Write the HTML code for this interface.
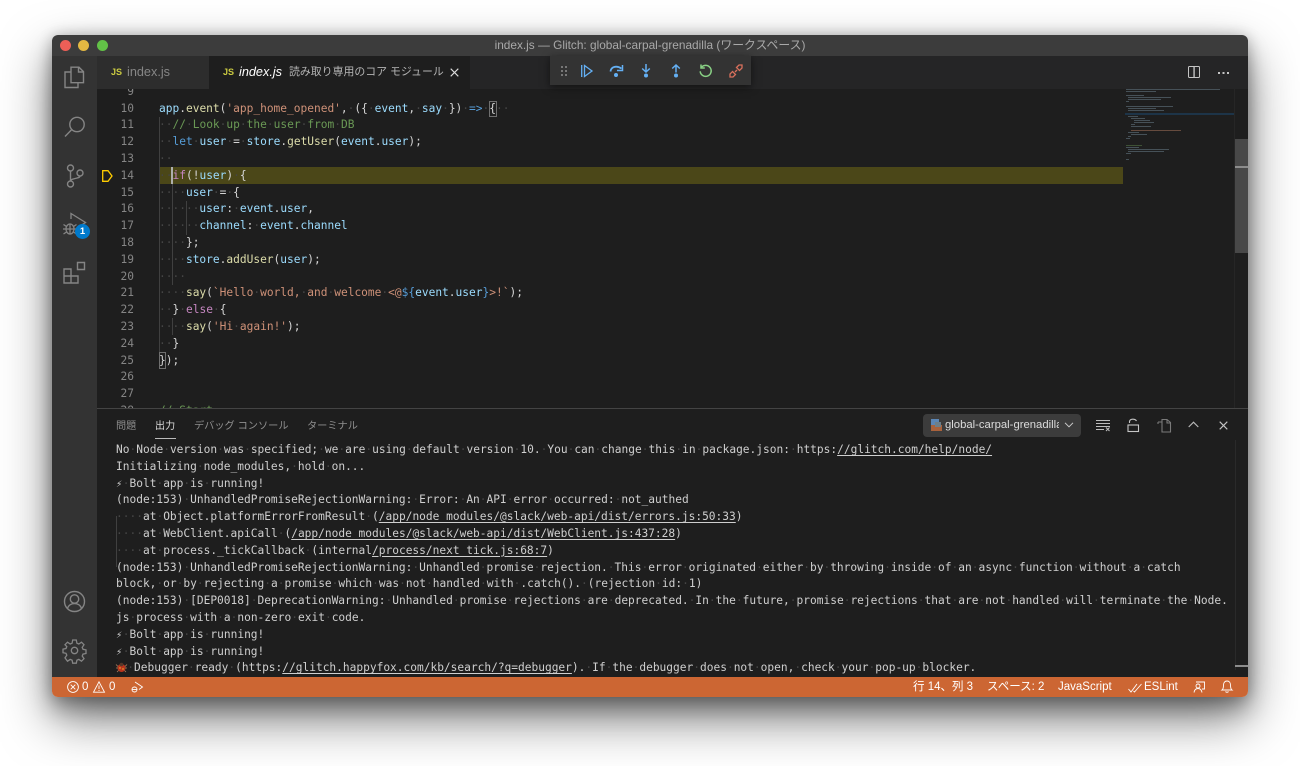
<!DOCTYPE html>
<html lang="ja"><head><meta charset="utf-8"><title>index.js</title>
<style>
html,body{margin:0;padding:0;width:1300px;height:766px;overflow:hidden;background:#fff}
body{position:relative;font-family:"Liberation Sans","Noto Sans CJK JP",sans-serif}
.a{position:absolute}
#win{position:absolute;left:52px;top:35px;width:1196px;height:662px;border-radius:6px;box-shadow:0 22px 50px rgba(0,0,0,.5),0 12px 22px rgba(0,0,0,.28),0 0 14px rgba(0,0,0,.2)}
.mono{font:11.2px/16.8px "DejaVu Sans Mono","Liberation Mono",monospace;white-space:pre}
.mono i{font-style:normal;color:#454545}
.v{color:#9cdcfe}.f{color:#dcdcaa}.s{color:#ce9178}.k{color:#569cd6}.c{color:#c586c0}.m{color:#6a9955}.t{color:#d4d4d4}
u{text-decoration:underline;text-underline-offset:2px}
svg{position:absolute;overflow:visible}
.st{position:absolute;top:680px;color:#fff;font-size:11.5px;line-height:14px;white-space:nowrap}
</style></head><body>
<div id="win"></div>
<div class="a" style="left:52px;top:35px;width:1196px;height:21px;background:#3c3c3c;border-radius:6px 6px 0 0"></div>
<div class="a" style="left:60px;top:40px;width:11px;height:11px;border-radius:50%;background:#ed5f57"></div>
<div class="a" style="left:78px;top:40px;width:11px;height:11px;border-radius:50%;background:#e3b842"></div>
<div class="a" style="left:97px;top:40px;width:11px;height:11px;border-radius:50%;background:#62c147"></div>
<div class="a" style="left:52px;top:35px;width:1196px;height:21px;line-height:21px;text-align:center;color:#a9a9a9;font-size:11.85px">index.js — Glitch: global-carpal-grenadilla (ワークスペース)</div>

<div class="a" style="left:52px;top:56px;width:45px;height:621px;background:#333"></div>
<div class="a" style="left:97px;top:56px;width:1151px;height:33px;background:#252526"></div>
<div class="a" style="left:97px;top:56px;width:112px;height:33px;background:#2d2d2d"></div>
<div class="a" style="left:209px;top:56px;width:261px;height:33px;background:#1e1e1e"></div>
<div class="a" style="left:111px;top:67px;color:#cbcb41;font-size:9px;font-weight:bold;line-height:11px">JS</div>
<div class="a" style="left:127px;top:64px;color:#868686;font-size:12.7px;line-height:16px">index.js</div>
<div class="a" style="left:223px;top:67px;color:#cbcb41;font-size:9px;font-weight:bold;line-height:11px">JS</div>
<div class="a" style="left:239px;top:64px;color:#fff;font-size:12.7px;line-height:16px;font-style:italic">index.js</div>
<div class="a" style="left:289px;top:64px;color:#b4b4b4;font-size:10.9px;line-height:16px;white-space:nowrap">読み取り専用のコア モジュール</div>
<svg style="left:450px;top:68px" width="9" height="9" viewBox="0 0 9 9"><path d="M.7.7l7.6 7.6M8.3.7L.7 8.3" stroke="#ddd" stroke-width="1.1" fill="none"/></svg>
<svg style="left:1188px;top:66px" width="12" height="12" viewBox="0 0 12 12"><rect x=".5" y=".5" width="11" height="11" rx="1" fill="none" stroke="#c5c5c5"/><rect x="5.2" y="1" width="1.8" height="10" fill="#a0a0a0"/></svg>
<div class="a" style="left:1218px;top:72px;width:2px;height:2px;background:#c5c5c5;box-shadow:4.5px 0 #c5c5c5,9px 0 #c5c5c5"></div>

<!-- activity icons -->
<svg style="left:63px;top:66px" width="23" height="24" viewBox="0 0 23 24" fill="none" stroke="#858585" stroke-width="1.4"><path d="M8 1.2h8l4.5 4.5v11H8zM15.5 1.5v4.5h5"/><path d="M8 6H2v15.5h13V17"/></svg>
<svg style="left:64px;top:116px" width="22" height="22" viewBox="0 0 22 22" fill="none" stroke="#858585" stroke-width="1.4"><circle cx="13" cy="8.5" r="7.2"/><path d="M7.8 13.5L1 20.5"/></svg>
<svg style="left:65px;top:164px" width="20" height="24" viewBox="0 0 20 24" fill="none" stroke="#858585" stroke-width="1.4"><circle cx="5.5" cy="4" r="3"/><circle cx="5.5" cy="20" r="3"/><circle cx="15" cy="9" r="3"/><path d="M5.5 7v10M15 12c0 3-9.5 2-9.5 5"/></svg>
<svg style="left:62px;top:212px" width="26" height="26" viewBox="0 0 26 26" fill="none" stroke="#858585" stroke-width="1.3"><path d="M9 7V1.5l14.5 9-7 4.5"/><ellipse cx="8" cy="17" rx="4" ry="5"/><path d="M8 12v10M4 17h8M1.5 12.5l3 2M14.5 12.5l-3 2M1 17h3M15 17h-3M1.5 22l3-2M14.5 22l-3-2"/></svg>
<div class="a" style="left:75px;top:224px;width:15px;height:15px;border-radius:50%;background:#007acc;color:#fff;font-size:9.5px;font-weight:bold;line-height:15px;text-align:center">1</div>
<svg style="left:63px;top:261px" width="23" height="24" viewBox="0 0 23 24" fill="none" stroke="#858585" stroke-width="1.4"><path d="M1 8h7v7H1zM1 15h7v7H1zM8 15h7v7H8z"/><path d="M14.5 1.5h7v7h-7z"/></svg>
<svg style="left:64px;top:591px" width="21" height="21" viewBox="0 0 21 21" fill="none" stroke="#858585" stroke-width="1.4"><circle cx="10.5" cy="10.5" r="10"/><circle cx="10.5" cy="8" r="4.2"/><path d="M3.5 17.5c1-3.5 4-5 7-5s6 1.5 7 5"/></svg>
<svg style="left:63px;top:639px" width="23" height="23" viewBox="0 0 23 23" fill="none" stroke="#858585" stroke-width="1.3"><circle cx="11.5" cy="11.5" r="3.2"/><path d="M9.7 1h3.6l.6 3.2 1.9.8 2.7-1.8 2.5 2.5-1.8 2.7.8 1.9 3 .6v3.6l-3 .6-.8 1.9 1.8 2.7-2.5 2.5-2.700-1.800-1.900.8-.6 3H9.7l-.6-3-1.900-.8-2.700 1.800L2 18.900l1.800-2.700-.8-1.900-3-.6v-3.600l3-.6.8-1.900L2 5.700l2.500-2.500 2.700 1.800 1.900-.8z"/></svg>

<!-- editor -->
<div class="a" style="left:97px;top:89px;width:1151px;height:319px;background:#1e1e1e;overflow:hidden">
 <div class="a" style="left:62px;top:78px;width:964px;height:17px;background:#4b4718"></div>
 <div class="a" style="left:62px;top:28px;width:1px;height:235px;background:#404040"></div>
 <div class="a" style="left:75px;top:95px;width:1px;height:101px;background:#404040"></div>
 <div class="a" style="left:75px;top:229px;width:1px;height:17px;background:#404040"></div>
 <div class="a" style="left:89px;top:112px;width:1px;height:34px;background:#404040"></div>
 <div class="a" style="left:74px;top:78px;width:2px;height:17px;background:#aeafad"></div>
 <div class="a" style="left:392px;top:12px;width:6px;height:14px;border:1px solid #6f6f6f;box-sizing:content-box"></div>
 <div class="a" style="left:62px;top:263px;width:5px;height:15px;border:1px solid #6f6f6f"></div>
 <svg style="left:5px;top:81px" width="11" height="12" viewBox="0 0 11 12"><path d="M.7.7H6L10 6l-4 5.300H.7z" fill="none" stroke="#ffcc00" stroke-width="1.300"/></svg>
 <div class="a mono" style="left:0;top:-5.2px;width:37px;text-align:right;color:#858585">9
10
11
12
13
14
15
16
17
18
19
20
21
22
23
24
25
26
27
28</div>
 <div class="a mono t" style="left:62px;top:-5.2px">
<span class="v">app</span>.<span class="f">event</span>(<span class="s">'app_home_opened'</span>,<i>·</i>({<i>·</i><span class="v">event</span>,<i>·</i><span class="v">say</span><i>·</i>})<i>·</i><span class="k">=&gt;</span><i>·</i>{<i>··</i>
<i>··</i><span class="m">//<i>·</i>Look<i>·</i>up<i>·</i>the<i>·</i>user<i>·</i>from<i>·</i>DB</span>
<i>··</i><span class="k">let</span><i>·</i><span class="v">user</span><i>·</i>=<i>·</i><span class="v">store</span>.<span class="f">getUser</span>(<span class="v">event</span>.<span class="v">user</span>);
<i>··</i>
<i>··</i><span class="c">if</span>(!<span class="v">user</span>)<i>·</i>{
<i>····</i><span class="v">user</span><i>·</i>=<i>·</i>{
<i>······</i><span class="v">user</span>:<i>·</i><span class="v">event</span>.<span class="v">user</span>,
<i>······</i><span class="v">channel</span>:<i>·</i><span class="v">event</span>.<span class="v">channel</span>
<i>····</i>};
<i>····</i><span class="v">store</span>.<span class="f">addUser</span>(<span class="v">user</span>);
<i>····</i>
<i>····</i><span class="f">say</span>(<span class="s">`Hello<i>·</i>world,<i>·</i>and<i>·</i>welcome<i>·</i>&lt;@</span><span class="k">${</span><span class="v">event</span>.<span class="v">user</span><span class="k">}</span><span class="s">&gt;!`</span>);
<i>··</i>}<i>·</i><span class="c">else</span><i>·</i>{
<i>····</i><span class="f">say</span>(<span class="s">'Hi<i>·</i>again!'</span>);
<i>··</i>}
});


<span class="m">//<i>·</i>Start</span></div>
 <!-- minimap -->
 <svg style="left:1028px;top:0" width="110" height="70" viewBox="0 0 110 70">
  <rect x="0" y="24" width="110" height="2" fill="#1d3448"/>
  <g fill="#7f97a8" opacity=".42">
   <rect x="1" y="0" width="94" height="1"/><rect x="1" y="2" width="30" height="1"/>
   <rect x="1" y="6" width="18" height="1"/><rect x="3" y="8" width="43" height="1"/><rect x="3" y="10" width="33" height="1"/><rect x="1" y="12" width="3" height="1"/>
   <rect x="1" y="17" width="47" height="1"/><rect x="3" y="19" width="28" height="1"/><rect x="3" y="21" width="36" height="1"/>
   <rect x="3" y="27" width="10" height="1"/><rect x="6" y="29" width="14" height="1"/><rect x="9" y="31" width="16" height="1"/><rect x="9" y="33" width="20" height="1"/><rect x="6" y="35" width="4" height="1"/><rect x="6" y="37" width="20" height="1"/>
   <rect x="6" y="41" width="50" height="1" fill="#c98a6c"/><rect x="3" y="43" width="11" height="1"/><rect x="6" y="45" width="16" height="1"/><rect x="3" y="47" width="3" height="1"/><rect x="1" y="49" width="4" height="1"/>
   <rect x="1" y="56" width="16" height="1" fill="#6a9955"/><rect x="1" y="58" width="13" height="1"/><rect x="3" y="60" width="41" height="1"/><rect x="3" y="62" width="36" height="1"/><rect x="1" y="64" width="5" height="1"/><rect x="1" y="70" width="3" height="1"/>
  </g>
 </svg>
 <div class="a" style="left:1138px;top:50px;width:13px;height:114px;background:#484848"></div>
 <div class="a" style="left:1138px;top:77px;width:13px;height:1.5px;background:#8c8c8c"></div>
 <div class="a" style="left:1137px;top:0;width:1px;height:319px;background:#262626"></div>
</div>

<!-- debug toolbar -->
<div class="a" style="left:550px;top:56px;width:201px;height:29px;background:#333;box-shadow:0 2px 8px rgba(0,0,0,.55)"></div>
<div class="a" style="left:561px;top:66px;width:2px;height:2px;background:#777;box-shadow:4px 0 #777,0 4px #777,4px 4px #777,0 8px #777,4px 8px #777"></div>
<svg style="left:581px;top:64px" width="12" height="14" viewBox="0 0 12 14" fill="none" stroke="#64b0f4" stroke-width="1.300"><path d="M.7 1v12"/><path d="M3.5 1.5L11 7l-7.5 5.500z"/></svg>
<svg style="left:609px;top:64px" width="15" height="14" viewBox="0 0 15 14"><path d="M1.5 7.500C2 3 7 1 12.500 4.500" fill="none" stroke="#64b0f4" stroke-width="1.800"/><path d="M13.500 1v5.500H8" fill="none" stroke="#64b0f4" stroke-width="1.500"/><circle cx="7" cy="11" r="2" fill="#64b0f4"/></svg>
<svg style="left:641px;top:64px" width="10" height="14" viewBox="0 0 10 14"><path d="M5 0v7.500M1.200 4.500L5 8l3.800-3.500" fill="none" stroke="#64b0f4" stroke-width="1.500"/><circle cx="5" cy="11.500" r="2" fill="#64b0f4"/></svg>
<svg style="left:671px;top:64px" width="10" height="14" viewBox="0 0 10 14"><path d="M5 8.500V1M1.200 4.500L5 1l3.800 3.500" fill="none" stroke="#64b0f4" stroke-width="1.500"/><circle cx="5" cy="11.500" r="2" fill="#64b0f4"/></svg>
<svg style="left:699px;top:64px" width="13" height="14" viewBox="0 0 13 14" fill="none" stroke="#89d185" stroke-width="1.500"><path d="M2.500 3.300a5.500 5.500 0 1 1-1.300 4"/><path d="M2 .5v3.500h3.800"/></svg>
<svg style="left:729px;top:64px" width="14" height="14" viewBox="0 0 14 14" fill="none" stroke="#d9705c" stroke-width="1.300"><path d="M7.500 3.500l2.500-2.500 3 0 0 3-2.500 2.500zM3.500 7.500L6.500 10.500 4 13H1v-3zM8 6L6 8"/></svg>

<!-- panel -->
<div class="a" style="left:97px;top:408px;width:1151px;height:269px;background:#1e1e1e;border-top:1px solid #444;box-sizing:border-box;overflow:hidden">
 <div class="a" style="left:19px;top:9.5px;color:#8f8f8f;font-size:10.1px;line-height:15px">問題</div>
 <div class="a" style="left:58px;top:9.5px;color:#dcdcdc;font-size:10.1px;line-height:15px">出力</div>
 <div class="a" style="left:58px;top:29px;width:21px;height:1px;background:#bbb"></div>
 <div class="a" style="left:97px;top:9.5px;color:#8f8f8f;font-size:10.2px;line-height:15px;white-space:nowrap">デバッグ コンソール</div>
 <div class="a" style="left:210px;top:9.5px;color:#8f8f8f;font-size:10.2px;line-height:15px;white-space:nowrap">ターミナル</div>
 <div class="a" style="left:826px;top:5px;width:158px;height:23px;background:#3c3c3c;border-radius:4px"></div>
 <svg style="left:834px;top:10px" width="11" height="13" viewBox="0 0 11 13"><rect x="0" y="0" width="8" height="6" fill="#5b86b5"/><rect x="0" y="6" width="11" height="6" fill="#a9623c"/><rect x="4" y="3" width="6" height="5" fill="#6f7f88"/></svg>
 <div class="a" style="left:848px;top:9px;width:114px;height:15px;overflow:hidden;color:#dcdcdc;font-size:11.3px;line-height:15px;white-space:nowrap">global-carpal-grenadilla</div>
 <svg style="left:967px;top:13px" width="10" height="6" viewBox="0 0 10 6"><path d="M1 .8l4 4 4-4" fill="none" stroke="#ccc" stroke-width="1"/></svg>
 <svg style="left:999px;top:10px" width="15" height="13" viewBox="0 0 15 13" fill="none" stroke="#bdbdbd" stroke-width="1"><path d="M0 1.500h14M0 4.500h14M0 7.500h14M0 10.500h8M10 8.500l3.500 3.500M13.500 8.500L10 12"/></svg>
 <svg style="left:1030px;top:9px" width="13" height="15" viewBox="0 0 13 15" fill="none" stroke="#c5c5c5" stroke-width="1.100"><rect x="1" y="7" width="10.500" height="6.500"/><path d="M2.500 5V3.500C3 .5 8 .5 9.500 3"/></svg>
 <svg style="left:1060px;top:9px" width="15" height="15" viewBox="0 0 15 15" fill="none" stroke="#7a7a7a" stroke-width="1.100"><path d="M5 1.500h5l3.500 3v9.500h-8.500zM1 4h4M1 4v2M10 1.500V5h3.500"/></svg>
 <svg style="left:1091px;top:12px" width="11" height="7" viewBox="0 0 11 7"><path d="M.7 6l4.800-4.800L10.300 6" fill="none" stroke="#bbb" stroke-width="1.100"/></svg>
 <svg style="left:1122px;top:12px" width="9" height="9" viewBox="0 0 9 9"><path d="M.7.7l7.600 7.600M8.300.7L.7 8.300" stroke="#c5c5c5" stroke-width="1.100" fill="none"/></svg>
 <div class="a" style="left:19px;top:107px;width:1px;height:51px;background:#404040"></div>
 <div class="a" style="left:1138px;top:31px;width:1px;height:230px;background:#2a2a2a"></div>
 <div class="a" style="left:1138px;top:256px;width:13px;height:1.5px;background:#8c8c8c"></div>
 <div class="a mono" style="left:19px;top:33px;color:#cfcfcf">No<i>·</i>Node<i>·</i>version<i>·</i>was<i>·</i>specified;<i>·</i>we<i>·</i>are<i>·</i>using<i>·</i>default<i>·</i>version<i>·</i>10.<i>·</i>You<i>·</i>can<i>·</i>change<i>·</i>this<i>·</i>in<i>·</i>package.json:<i>·</i>https:<u>//glitch.com/help/node/</u>
Initializing<i>·</i>node_modules,<i>·</i>hold<i>·</i>on...
<span style="display:inline-block;width:6.74px;font:9px/12px 'DejaVu Sans',sans-serif;color:#ddd">⚡</span><i>·</i>Bolt<i>·</i>app<i>·</i>is<i>·</i>running!
(node:153)<i>·</i>UnhandledPromiseRejectionWarning:<i>·</i>Error:<i>·</i>An<i>·</i>API<i>·</i>error<i>·</i>occurred:<i>·</i>not_authed
<i>····</i>at<i>·</i>Object.platformErrorFromResult<i>·</i>(<u>/app/node_modules/@slack/web-api/dist/errors.js:50:33</u>)
<i>····</i>at<i>·</i>WebClient.apiCall<i>·</i>(<u>/app/node_modules/@slack/web-api/dist/WebClient.js:437:28</u>)
<i>····</i>at<i>·</i>process._tickCallback<i>·</i>(internal<u>/process/next_tick.js:68:7</u>)
(node:153)<i>·</i>UnhandledPromiseRejectionWarning:<i>·</i>Unhandled<i>·</i>promise<i>·</i>rejection.<i>·</i>This<i>·</i>error<i>·</i>originated<i>·</i>either<i>·</i>by<i>·</i>throwing<i>·</i>inside<i>·</i>of<i>·</i>an<i>·</i>async<i>·</i>function<i>·</i>without<i>·</i>a<i>·</i>catch
block,<i>·</i>or<i>·</i>by<i>·</i>rejecting<i>·</i>a<i>·</i>promise<i>·</i>which<i>·</i>was<i>·</i>not<i>·</i>handled<i>·</i>with<i>·</i>.catch().<i>·</i>(rejection<i>·</i>id:<i>·</i>1)
(node:153)<i>·</i>[DEP0018]<i>·</i>DeprecationWarning:<i>·</i>Unhandled<i>·</i>promise<i>·</i>rejections<i>·</i>are<i>·</i>deprecated.<i>·</i>In<i>·</i>the<i>·</i>future,<i>·</i>promise<i>·</i>rejections<i>·</i>that<i>·</i>are<i>·</i>not<i>·</i>handled<i>·</i>will<i>·</i>terminate<i>·</i>the<i>·</i>Node.
js<i>·</i>process<i>·</i>with<i>·</i>a<i>·</i>non-zero<i>·</i>exit<i>·</i>code.
<span style="display:inline-block;width:6.74px;font:9px/12px 'DejaVu Sans',sans-serif;color:#ddd">⚡</span><i>·</i>Bolt<i>·</i>app<i>·</i>is<i>·</i>running!
<span style="display:inline-block;width:6.74px;font:9px/12px 'DejaVu Sans',sans-serif;color:#ddd">⚡</span><i>·</i>Bolt<i>·</i>app<i>·</i>is<i>·</i>running!
<span style="display:inline-block;width:11.3px;height:10px"></span><i>·</i>Debugger<i>·</i>ready<i>·</i>(https:<u>//glitch.happyfox.com/kb/search/?q=debugger</u>).<i>·</i>If<i>·</i>the<i>·</i>debugger<i>·</i>does<i>·</i>not<i>·</i>open,<i>·</i>check<i>·</i>your<i>·</i>pop-up<i>·</i>blocker.</div>
 <svg style="left:19px;top:253px" width="11" height="11" viewBox="0 0 11 11"><circle cx="5.5" cy="6" r="4" fill="#b8341c"/><circle cx="5.5" cy="2.5" r="1.800" fill="#55382a"/><path d="M0 2.500l2 2M11 2.500l-2 2M0 6h2M9 6h2M1 10l1.500-1.500M10 10L8.500 8.500" stroke="#b08060" stroke-width=".8"/><circle cx="4" cy="6" r=".7" fill="#f1c232"/><circle cx="7" cy="7" r=".7" fill="#f1c232"/></svg>
</div>

<!-- status bar -->
<div class="a" style="left:52px;top:677px;width:1196px;height:20px;background:#cc6633;border-radius:0 0 6px 6px"></div>
<svg style="left:67px;top:681px" width="12" height="12" viewBox="0 0 12 12" fill="none" stroke="#fff" stroke-width=".9"><circle cx="6" cy="6" r="5.400"/><path d="M3.700 3.700l4.600 4.600M8.300 3.700L3.700 8.300"/></svg>
<div class="st" style="left:82px">0</div>
<svg style="left:93px;top:681px" width="12" height="12" viewBox="0 0 12 12" fill="none" stroke="#fff" stroke-width=".9"><path d="M6 .8l5.500 10.400H.5zM6 4.500v3.500M6 9v1"/></svg>
<div class="st" style="left:109px">0</div>
<svg style="left:131px;top:681px" width="12" height="12" viewBox="0 0 12 12" fill="none" stroke="#fff" stroke-width=".9"><path d="M4 1l7.500 5-3.500 2.500"/><ellipse cx="3.500" cy="8.500" rx="2.500" ry="2.500"/><path d="M1 8.500h5"/></svg>
<div class="st" style="left:913px">行 14、列 3</div>
<div class="st" style="left:987px">スペース: 2</div>
<div class="st" style="left:1058px">JavaScript</div>
<svg style="left:1128px;top:683px" width="14" height="10" viewBox="0 0 14 10" fill="none" stroke="#fff" stroke-width=".9"><path d="M.5 6l2.500 3L9 1M5.500 8l1 1L13.500 1"/></svg>
<div class="st" style="left:1144px">ESLint</div>
<svg style="left:1193px;top:681px" width="12" height="12" viewBox="0 0 12 12" fill="none" stroke="#fff" stroke-width=".9"><path d="M3 1h8.500v7H9"/><circle cx="5" cy="5" r="2"/><path d="M1 11.500c.5-3 2-4 4-4s3.500 1 4 4"/></svg>
<svg style="left:1221px;top:680px" width="12" height="13" viewBox="0 0 12 13" fill="none" stroke="#fff" stroke-width=".9"><path d="M1 10c1.500-1 1.500-3 1.500-5C2.500 2.500 4 1 6 1s3.500 1.500 3.500 4c0 2 0 4 1.500 5zM4.500 11.500c.5 1 2.500 1 3 0"/></svg>
</body></html>
